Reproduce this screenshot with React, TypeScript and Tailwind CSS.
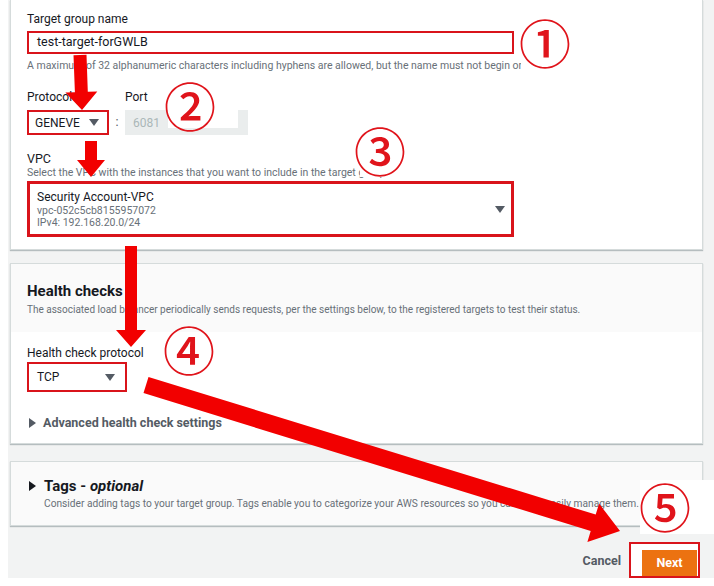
import React from "react";

const arrowPoints = (
  x1: number,
  y1: number,
  x2: number,
  y2: number,
  shaft: number,
  headW: number,
  headL: number
) => {
  const dx = x2 - x1;
  const dy = y2 - y1;
  const len = Math.hypot(dx, dy);
  const ux = dx / len;
  const uy = dy / len;
  const nx = -uy;
  const ny = ux;
  const bx = x2 - ux * headL;
  const by = y2 - uy * headL;
  const pts = [
    [x1 + (nx * shaft) / 2, y1 + (ny * shaft) / 2],
    [bx + (nx * shaft) / 2, by + (ny * shaft) / 2],
    [bx + (nx * headW) / 2, by + (ny * headW) / 2],
    [x2, y2],
    [bx - (nx * headW) / 2, by - (ny * headW) / 2],
    [bx - (nx * shaft) / 2, by - (ny * shaft) / 2],
    [x1 - (nx * shaft) / 2, y1 - (ny * shaft) / 2],
  ];
  return pts.map((p) => p.map((v) => v.toFixed(1)).join(",")).join(" ");
};

const Caret = () => (
  <svg width="10" height="7" viewBox="0 0 10 7">
    <polygon points="0,0 10,0 5,7" fill="#545b64" />
  </svg>
);

const Expand = ({ color = "#545b64" }: { color?: string }) => (
  <svg width="7" height="10" viewBox="0 0 7 10">
    <polygon points="0,0 7,5 0,10" fill={color} />
  </svg>
);

const App = () => {
  return (
    <div className="relative w-[714px] h-[586px] bg-white overflow-hidden font-['Roboto',sans-serif]">
      <div className="ml-2 h-[578px] bg-[#f2f3f3] flex flex-col">
        {/* target group details */}
        <div className="ml-[2px] w-[693px] bg-white border-x border-b border-[#d5dbdb] shadow-[0_1px_1px_rgba(0,28,36,0.25)] px-4 pt-[10px] pb-3">
          <div className="text-[12px] leading-[18px] text-[#16191f]">Target group name</div>
          <div className="mt-[3px] w-[487px] h-[23px] border-2 border-[#d9141b] flex items-center pl-2 text-[12.5px] text-[#16191f]">
            test-target-forGWLB
          </div>
          <div className="mt-1 text-[10.5px] leading-4 text-[#687078] whitespace-nowrap">
            A maximum of 32 alphanumeric characters including hyphens are allowed, but the name must not begin or end with a hyphen.
          </div>

          <div className="mt-[14px] flex items-end">
            <div className="w-[82px]">
              <div className="text-[12px] leading-[18px] text-[#16191f]">Protocol</div>
              <div className="mt-1 h-[25px] border-2 border-[#d9141b] flex items-center justify-between pl-[6px] pr-2 text-[12px] text-[#16191f]">
                GENEVE
                <Caret />
              </div>
            </div>
            <div className="w-[16px] h-[25px] flex items-center justify-center text-[12.5px] text-[#545b64]">:</div>
            <div className="w-[123px]">
              <div className="text-[12px] leading-[18px] text-[#16191f]">Port</div>
              <div className="mt-1 h-[25px] bg-[#eaeded] flex items-center pl-2 text-[12px] text-[#aab7b8]">6081</div>
            </div>
          </div>

          <div className="mt-4 text-[12.5px] leading-4 text-[#16191f]">VPC</div>
          <div className="text-[10.5px] leading-3 text-[#687078] whitespace-nowrap">
            Select the VPC with the instances that you want to include in the target group.
          </div>
          <div className="mt-[2px] w-[487px] h-[56px] border-[3px] border-[#d9141b] flex items-center justify-between pl-[7px] pr-[6px]">
            <div className="flex flex-col">
              <span className="text-[12px] leading-4 text-[#16191f]">Security Account-VPC</span>
              <span className="text-[10.5px] leading-3 text-[#687078]">vpc-052c5cb8155957072</span>
              <span className="text-[10.5px] leading-3 text-[#687078]">IPv4: 192.168.20.0/24</span>
            </div>
            <Caret />
          </div>
        </div>

        {/* health checks */}
        <div className="mt-[13px] ml-[2px] w-[693px] bg-white border border-[#d5dbdb] shadow-[0_1px_1px_rgba(0,28,36,0.25)]">
          <div className="bg-[#fafafa] px-4 pt-[17px] pb-[14px]">
            <div className="text-[15px] leading-5 font-bold text-[#16191f]">Health checks</div>
            <div className="mt-[1px] text-[10px] leading-4 text-[#687078] whitespace-nowrap">
              The associated load balancer periodically sends requests, per the settings below, to the registered targets to test their status.
            </div>
          </div>
          <div className="px-4 pt-3 pb-[11px]">
            <div className="text-[12px] leading-[18px] text-[#16191f]">Health check protocol</div>
            <div className="w-[100px] h-[30px] border-2 border-[#d9141b] flex items-center justify-between pl-2 pr-[10px] text-[12px] text-[#16191f]">
              TCP
              <Caret />
            </div>
            <div className="mt-[22px] flex items-center gap-[7px] pl-[2px] text-[12.5px] leading-[18px] font-bold text-[#545b64]">
              <Expand />
              Advanced health check settings
            </div>
          </div>
        </div>

        {/* tags */}
        <div className="mt-[17px] ml-[2px] w-[693px] bg-[#fafafa] border border-[#d5dbdb] shadow-[0_1px_1px_rgba(0,28,36,0.25)] px-4 pt-[14px] pb-[13px]">
          <div className="flex items-center gap-[8px] pl-[2px] text-[15px] leading-5 font-bold text-[#16191f]">
            <Expand color="#16191f" />
            <span>
              Tags - <i>optional</i>
            </span>
          </div>
          <div className="pl-[17px] text-[10.2px] leading-4 text-[#687078] whitespace-nowrap">
            Consider adding tags to your target group. Tags enable you to categorize your AWS resources so you can more easily manage them.
          </div>
        </div>

        {/* footer */}
        <div className="ml-[2px] w-[693px] flex justify-end items-end pt-4 pr-[3px]">
          <span className="mr-2 mb-[7px] text-[12.5px] font-bold text-[#545b64]">Cancel</span>
          <div className="h-[36px] border-2 border-[#d9141b] bg-white pl-[11px] pt-[6px] pr-[1px]">
            <div className="w-[55px] h-[26px] bg-[#ec7211] flex items-center justify-center text-[12.5px] font-bold text-white">
              Next
            </div>
          </div>
        </div>
      </div>

      {/* white patches behind the numbers */}
      <div className="absolute left-[521px] top-[22px] w-[179px] h-[50px] bg-white" />
      <div className="absolute left-[168px] top-[80px] w-[70px] h-[48px] bg-white" />
      <div className="absolute left-[360px] top-[126px] w-[72px] h-[51px] bg-white" />
      <div className="absolute left-[163px] top-[333px] w-[76px] h-[40px] bg-white" />
      <div className="absolute left-[640px] top-[480px] w-[74px] h-[54px] bg-white" />

      {/* arrows */}
      <svg className="absolute inset-0 pointer-events-none" width="714" height="586">
        <polygon points={arrowPoints(80, 55, 82, 110, 13, 32, 18)} fill="#f20000" />
        <polygon points={arrowPoints(91, 141, 91, 177, 12, 28, 17)} fill="#f20000" />
        <polygon points={arrowPoints(131, 246, 131, 347, 12, 30, 17)} fill="#f20000" />
        <polygon points={arrowPoints(146, 385, 620, 531, 17, 40, 28)} fill="#f20000" />
      </svg>

      {/* circled numbers */}
      <span className="absolute left-[545px] top-[42px] -translate-x-1/2 -translate-y-1/2 text-[52px] leading-none font-medium text-[#e0141b] font-['Noto_Sans_CJK_JP',sans-serif]">①</span>
      <span className="absolute left-[190px] top-[105px] -translate-x-1/2 -translate-y-1/2 text-[52px] leading-none font-medium text-[#e0141b] font-['Noto_Sans_CJK_JP',sans-serif]">②</span>
      <span className="absolute left-[380px] top-[150px] -translate-x-1/2 -translate-y-1/2 text-[52px] leading-none font-medium text-[#e0141b] font-['Noto_Sans_CJK_JP',sans-serif]">③</span>
      <span className="absolute left-[189px] top-[349px] -translate-x-1/2 -translate-y-1/2 text-[52px] leading-none font-medium text-[#e0141b] font-['Noto_Sans_CJK_JP',sans-serif]">④</span>
      <span className="absolute left-[665px] top-[506px] -translate-x-1/2 -translate-y-1/2 text-[52px] leading-none font-medium text-[#e0141b] font-['Noto_Sans_CJK_JP',sans-serif]">⑤</span>
    </div>
  );
};

export default App;
